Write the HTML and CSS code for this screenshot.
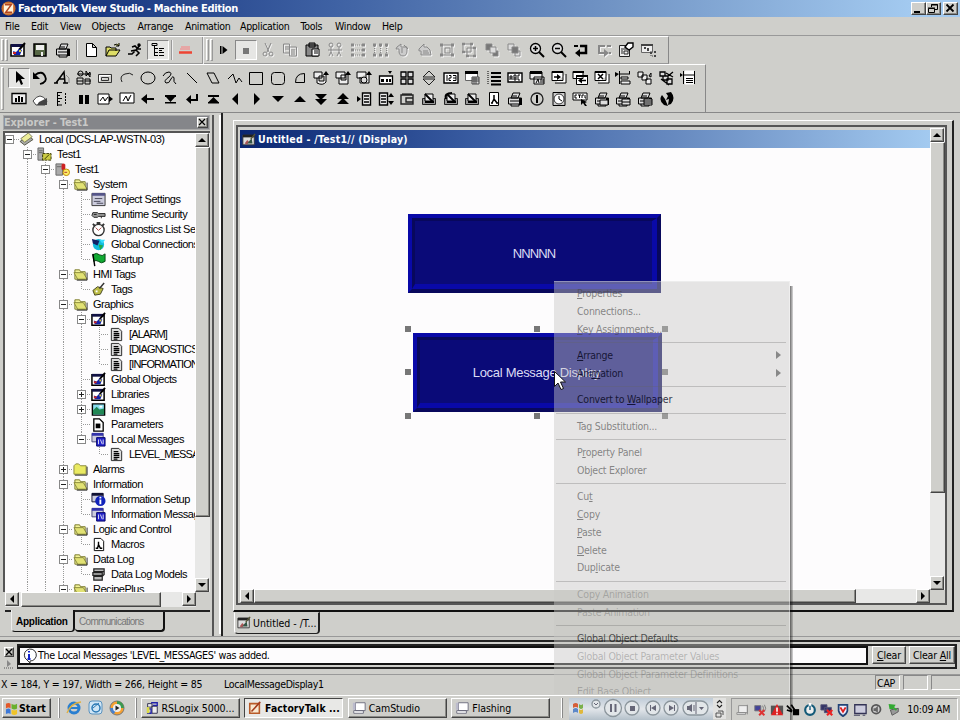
FILE: index.html
```html
<!DOCTYPE html>
<html lang="en">
<head>
<meta charset="utf-8">
<title>FactoryTalk View Studio - Machine Edition</title>
<link rel="stylesheet" href="styles.css">
</head>
<body>
<svg class="defs" width="0" height="0">
<symbol id="display" viewBox="0 0 16 16"><path fill="#fff" stroke="#000" stroke-width="1.6" d="M1 3h13v11H1z"/><path fill="#114" d="M1 2h13v3H1z"/><path stroke="#000" stroke-width="2" d="M9 8l6-7"/><path fill="#12a" d="M3 9l3 1 3-3 3 1-2 5H4z"/><path fill="#c22" d="M3 10h3v2H3z"/><path fill="#dc3" d="M9 8h2v2H9z"/></symbol>
<symbol id="form" viewBox="0 0 16 16"><path fill="#ddd" stroke="#333" d="M1 2.500h13v11H1z"/><path fill="#222" d="M1 2h13v3H1z"/><path fill="#a55" d="M3 12l3-4 2 2-2 3z"/><path fill="#354" d="M6 12l5-6 1 6z"/><path stroke="#553" stroke-width="1.500" d="M10 7l5-6"/></symbol>
<symbol id="folder" viewBox="0 0 16 16"><path fill="#f4f49a" stroke="#77772a" d="M2 13V3h5l1 2h5v8z"/><path fill="#e2e274" stroke="#88883a" d="M1 6h10l4 7H5z"/><path stroke="#222" d="M4 14h11V6"/></symbol>
<symbol id="closed" viewBox="0 0 16 16"><path fill="#eaea62" stroke="#88883a" d="M1 13V4l2-2h3l2 2h6v9z"/><path stroke="#222" d="M2 14h13V5"/></symbol>
<symbol id="doc" viewBox="0 0 16 16"><path fill="#ddd" stroke="#222" d="M2.500 1.500h8l3 3v10h-11z"/><path stroke="#000" stroke-width="1.300" d="M5 5h5M5 7h6M5 9h6M5 11h6M5 13h4"/></symbol>
<symbol id="msg" viewBox="0 0 16 16"><path fill="#ccd" stroke="#447" d="M1 1.500h12v9H1z"/><path fill="#33a" d="M1 1h12v3H1z"/><path fill="#22c" stroke="#006" d="M6 6h9v9H6z"/><path stroke="#dde" d="M8 8v5M10 8l2 5M13 8v5"/></symbol>
<symbol id="prn" viewBox="0 0 16 16"><path fill="#ddd" stroke="#000" d="M1.500 7h13v6h-13zM4 7l2-5h7l-2 5zM3 10h10M5 5h5M4 13v2h8v-2"/><path fill="#000" d="M12 7h3v7h-3z"/></symbol>
<symbol id="pen" viewBox="0 0 16 16"><path fill="#999" stroke="#222" d="M1.500 7.500h13v6h-13z"/><path fill="#eee" stroke="#000" d="M4 3h8v7H4z"/><path stroke="#000" stroke-width="1.800" d="M4 3l8 8M4 11h9"/></symbol>
</svg>

<header class="title">
  <svg class="logo" viewBox="0 0 16 16"><circle cx="8" cy="8" r="7.500" fill="#c86a28"/><path fill="#fff5dc" d="M3 3h10v10H3z"/><path stroke="#b4461e" stroke-width="1.500" d="M4 4h7L5 12h7"/></svg>
  <span class="titletext">FactoryTalk View Studio - Machine Edition</span>
  <span class="wbtns"><b><svg viewBox="0 0 12 11"><path stroke="#000" stroke-width="2" d="M2 9h6"/></svg></b><b><svg viewBox="0 0 12 11"><path stroke="#000" d="M4.500 4V1.500h6v5H8M1.500 5.500h6v4h-6zM4 2h7M1 5h7"/></svg></b><b class="gap"><svg viewBox="0 0 12 11"><path stroke="#000" stroke-width="1.800" d="M2.500 1.500l7 7M9.500 1.500l-7 7"/></svg></b></span>
</header>

<nav class="menubar"><span>File</span><span>Edit</span><span>View</span><span>Objects</span><span>Arrange</span><span>Animation</span><span>Application</span><span>Tools</span><span>Window</span><span>Help</span></nav>

<div class="tb tb1">
  <i class="grip"></i><i class="grip"></i>
  <svg><use href="#display"/></svg>
  <svg viewBox="0 0 16 16"><path fill="#564" stroke="#000" stroke-width="1.500" d="M2 2h12v12H2z"/><path fill="#eee" d="M4 3h8v5H4zM9 10h2v4H9z"/></svg>
  <svg><use href="#prn"/></svg>
  <i class="sep"></i>
  <svg viewBox="0 0 16 16"><path fill="#fff" stroke="#000" d="M3.500 1.500h6l4 4v9h-10zM9.500 1.500v4h4"/></svg>
  <svg viewBox="0 0 16 16"><path fill="#dd6" stroke="#000" d="M1 14V5h4l1 1h5v3M1 14l3-6h11l-4 6zM9 3q3-2 5 1M14 1v3h-3"/></svg>
  <svg viewBox="0 0 16 16"><path stroke="#000" stroke-width="1.600" d="M13 3l-4 5-5 1M9 8l3 3-3 3M8 9l-3 3H1M5 5l3-1 3 3h3"/><circle cx="12" cy="3" r="1.700" fill="#000"/></svg>
  <span class="pressed"><svg viewBox="0 0 16 16"><path stroke="#000" d="M2 1.500h5v2H2zM4.500 4v10M5 6.500h3M5 13.500h3M9 6.500h5M9 8.500h3M5 10.500h3M9 10.500h5M9 13.500h5"/></svg></span>
  <i class="sep"></i>
  <svg viewBox="0 0 16 16"><path stroke="#e99" stroke-width="1.500" d="M4 5h9M3 7h10"/><path stroke="#e43" stroke-width="2.500" d="M2 10.500h13"/></svg>
  <i class="sep end"></i><i class="grip"></i><i class="grip g2"></i>
  <svg viewBox="0 0 16 16"><path fill="#000" d="M4 4h1.500v8H4zM6.500 4l5 4-5 4z"/></svg>
  <span class="pressed"><svg viewBox="0 0 16 16"><path fill="#777" d="M5 6h6v6H5z"/></svg></span>
  <svg class="off" viewBox="0 0 16 16"><path d="M5 1l4 9M11 1L7 10"/><circle cx="5" cy="12" r="2"/><circle cx="11" cy="12" r="2"/></svg>
  <svg class="off" viewBox="0 0 16 16"><path d="M1.500 2h6v9h-6zM3 5h4M3 7h4M7.500 5h7v9h-7zM9 8h4M9 10h4M9 12h4"/></svg>
  <svg viewBox="0 0 16 16"><path fill="#888" stroke="#000" d="M1 3h12v11H1zM4 1h6v4H4z"/><path fill="#fff" stroke="#000" d="M7 7h7v7H7zM9 9h4M9 11h4"/></svg>
  <svg class="off" viewBox="0 0 16 16"><circle cx="4" cy="3" r="2"/><circle cx="12" cy="3" r="2"/><path d="M4 5v5l-2 4M4 10l2 4M1 8h14M12 5v5l-2 4M12 10l2 4"/></svg>
  <svg class="off" viewBox="0 0 16 16"><path stroke-width="3" d="M1 3h3M12 3h3M1 8h3M12 8h3M1 13h3M12 13h3"/><path stroke-dasharray="1 1" d="M5 3h7M5 8h7M5 13h7"/></svg>
  <svg class="off" viewBox="0 0 16 16"><path stroke-width="3" d="M1 3h3M7 3h3M13 3h3M1 13h3M7 13h3M13 13h3"/><path stroke-dasharray="1 1" d="M2.500 4v8M8.500 4v8M14.500 4v8"/></svg>
  <svg class="off" viewBox="0 0 16 16"><path fill="#ccc" d="M3 5l4-3v3h6v4q0 5-4 5T5 9V7H2z"/><path d="M8 6v5M10 3l4 4"/></svg>
  <svg class="off" viewBox="0 0 16 16"><path fill="#ccc" d="M2 7l5-5v3h3q4 2 4 8H4V9H2z"/><path d="M6 9h5M6 11h6"/></svg>
  <svg class="off" viewBox="0 0 16 16"><path d="M3 3h10v10H3zM6 6h5v5H6z"/><path stroke-width="3" d="M1 3h3M12 3h3M1 13h3M12 13h3"/></svg>
  <svg class="off" viewBox="0 0 16 16"><path d="M2 2h8v8H2zM6 6h8v8H6z"/><path stroke-width="2.500" d="M1 2h3M9 2h3M1 10h3M12 14h3M12 6h3M5 14h3"/></svg>
  <svg class="off" viewBox="0 0 16 16"><path fill="#777" d="M2 2h6v6H2zM9 9h5v5H9z"/><path fill="#ddd" d="M6 5h6v6H6z"/></svg>
  <svg class="off" viewBox="0 0 16 16"><path fill="#ddd" d="M2 2h6v6H2zM9 9h5v5H9z"/><path fill="#777" d="M6 5h6v6H6z"/></svg>
  <svg viewBox="0 0 16 16"><circle cx="6.500" cy="6.500" r="5" fill="#ddd" stroke="#000" stroke-width="1.300"/><path stroke="#000" stroke-width="2" d="M10 10l5 5"/><path stroke="#000" stroke-width="1.500" d="M4 6.500h5M6.500 4v5"/></svg>
  <svg viewBox="0 0 16 16"><circle cx="6.500" cy="6.500" r="5" fill="#ddd" stroke="#000" stroke-width="1.300"/><path stroke="#000" stroke-width="2" d="M10 10l5 5"/><path stroke="#000" stroke-width="1.500" d="M4 6.500h5"/></svg>
  <svg viewBox="0 0 16 16"><path stroke="#000" stroke-width="2.500" d="M7 4h6v7H6"/><path fill="#000" d="M7 7v8l-5-4zM1 3h4v2H1z"/></svg>
  <svg class="off" viewBox="0 0 16 16"><path stroke-width="2" d="M9 4H3v7h5"/><path fill="#888" stroke="none" d="M8 7v8l5-4zM11 3h4v2h-4zM13 10h2v2h-2z"/></svg>
  <svg viewBox="0 0 16 16"><path fill="#eee" stroke="#222" d="M1.500 3.500h10v11h-10zM3 7h6M3 9h2M3 11h2M6 9h4v3H6z"/><path fill="#fff" stroke="#000" stroke-width="1.400" d="M7 5l3-4h5v4l-4 3z"/></svg>
  <svg viewBox="0 0 16 16"><path fill="#eee" stroke="#666" d="M1.500 2.500h11v8h-11z"/><path fill="#444" d="M1 2h12v2H1zM4 5h2v2H4zM7 6h2v3H7zM10 10h2v2h-2zM14 9h2v2h-2zM14 13h2v2h-2z"/><path stroke="#444" stroke-dasharray="1 1" d="M11 9v5h4"/></svg>
</div>

<div class="tb tb2">
 <i class="grip"></i>
 <div class="grid">
  <span class="pressed"><svg viewBox="0 0 16 16"><path fill="#000" d="M5 1v12l3-3 2 5 2-1-2-5h4z"/></svg></span>
  <svg viewBox="0 0 16 16"><path stroke="#000" stroke-width="1.800" d="M3 5q7-5 10 1t-5 8"/><path fill="#000" d="M1 2v7h7z"/></svg>
  <svg viewBox="0 0 16 16"><path stroke="#000" stroke-width="1.500" d="M2 13L10 2l1 11M5 9h6M0 13h4M9 13h5"/><path stroke="#888" d="M12 5l3 3v5"/></svg>
  <svg viewBox="0 0 16 16"><circle cx="4.500" cy="3.500" r="2.500" stroke="#000"/><path stroke="#000" d="M1 4h14M10 1v5l4-4v5zM1 8h6v6H1zM1 11h6M9 9h5v5H9zM9 11h6"/></svg>
  <svg viewBox="0 0 16 16"><path stroke="#333" d="M1.500 4.500h13v8h-13z"/><path fill="#ddd" stroke="#fff" d="M2.500 11V5.500h11"/><path stroke="#333" d="M4.500 7.500h7v3h-7z"/></svg>
  <svg viewBox="0 0 16 16"><path stroke="#222" d="M3 12Q0 6 6 4q5-2 8 1"/></svg>
  <svg viewBox="0 0 16 16"><ellipse cx="8" cy="8" rx="7" ry="6" stroke="#000"/></svg>
  <svg viewBox="0 0 16 16"><path stroke="#000" d="M1 6q2-4 6-4 4 1 0 5-6 4-3 6 3 1 5-4 2-4 3-1-1 4 2 6"/></svg>
  <svg viewBox="0 0 16 16"><path stroke="#000" d="M3 3l10 10"/></svg>
  <svg viewBox="0 0 16 16"><path stroke="#000" d="M2 3h7l5 10H7z"/></svg>
  <svg viewBox="0 0 16 16"><path stroke="#000" d="M1 9l5-5 3 9 3-5 3 4"/></svg>
  <svg viewBox="0 0 16 16"><path stroke="#000" d="M1.500 2.500h13v12h-13z"/></svg>
  <svg viewBox="0 0 16 16"><rect x="1.500" y="2.500" width="13" height="12" rx="3" stroke="#000"/></svg>
  <svg viewBox="0 0 16 16"><path stroke="#000" d="M3.500 12.500q0-9 9-9v9z"/></svg>
  <svg viewBox="0 0 16 16"><path fill="#eee" stroke="#000" d="M1 2h8v6H1zM4 8v5q6 3 9-1V3M6 6h5v5H6z"/><path fill="#000" d="M10 5l3-4 3 4z"/></svg>
  <svg viewBox="0 0 16 16"><path fill="#eee" stroke="#000" d="M1 2h9v6H1zM4 8v6h9V3M6 5h5v5H6z"/><path fill="#000" d="M10 5l3-4 3 4z"/></svg>
  <svg viewBox="0 0 16 16"><path fill="#eee" stroke="#000" d="M1 2h9v6H1zM4 7v6h9V3"/><circle cx="8" cy="10" r="3" fill="#ddd" stroke="#000"/><path fill="#000" d="M10 5l3-4 3 4z"/></svg>
  <svg viewBox="0 0 16 16"><path fill="#fff" stroke="#000" stroke-width="1.300" d="M1.500 6h13v8h-13z"/><path fill="#000" d="M3 9h3v3H3zM8 9h2v3H8zM11 9h2v3h-2zM10 1h4l-2 3z"/></svg>
  <svg viewBox="0 0 16 16"><path fill="#ddd" stroke="#000" stroke-width="1.300" d="M2 2h5v5H2zM9 2h5v5H9zM2 9h5v5H2zM9 9h5v5H9z"/></svg>
  <svg viewBox="0 0 16 16"><path stroke="#222" d="M2 7l6-6 6 6zM2 9l6 6 6-6z"/></svg>
  <svg viewBox="0 0 16 16"><path fill="#fff" stroke="#000" stroke-width="1.400" d="M1 3h14v10H1z"/><path stroke="#000" d="M4 5v6M6 5.500h2V8H6v2.500h2M10 5.500h3v5h-3M10 8h3"/></svg>
  <svg viewBox="0 0 16 16"><path fill="#fff" stroke="#666" d="M1.500 1.500h12v9h-12z"/><path fill="#000" d="M1 1h13v3H1z"/><path fill="#ddd" stroke="#444" d="M8 7h7v7H8zM8 9h7M8 11h7M10 7v7M12 7v7"/></svg>
  <svg viewBox="0 0 16 16"><path stroke="#000" stroke-width="2.200" d="M5 3h10M5 7h10M5 11h10M5 14.500h10"/><path stroke="#000" stroke-dasharray="1 1" d="M2 1v14"/></svg>
  <svg viewBox="0 0 16 16"><path fill="#fff" stroke="#000" stroke-width="1.400" d="M1 3h14v9H1z"/><path stroke="#000" d="M3 10V6h2v4M3 8h2M7 5v5h2V5zM7 8h2M13 5h-2v5h2"/></svg>
  <svg viewBox="0 0 16 16"><path fill="#eee" stroke="#000" d="M1 2h12v7H1zM5 7h10v7H5z"/><path fill="#000" d="M1 1h12v3H1z"/><path stroke="#000" d="M7 13l2-4 1 4M12 9v4M14 9v4"/></svg>
  <svg viewBox="0 0 16 16"><path fill="#fff" stroke="#000" d="M1 1.500h11v9H1zM4 13h11V4"/><path fill="#000" d="M1 1h11v2H1zM6 4l4 3-4 3z"/><path stroke="#000" stroke-width="1.500" d="M3 7h5"/></svg>
  <svg viewBox="0 0 16 16"><path fill="#fff" stroke="#000" d="M1 1.500h10v7H1zM4.500 5.500h11v9h-11z"/><path fill="#000" d="M1 1h11v2H1zM4 5h12v2H4zM10 7.500v6l-4-3z"/><path stroke="#000" stroke-width="1.500" d="M9 10.500h5"/></svg>
  <svg viewBox="0 0 16 16"><path fill="#fff" stroke="#000" d="M1 1.500h11v9H1zM4 13h11V4"/><path fill="#000" d="M1 1h11v2H1z"/><path stroke="#000" stroke-width="1.500" d="M4 4l5 5M9 4L4 9"/></svg>
  <svg viewBox="0 0 16 16"><path fill="#eee" stroke="#000" d="M4.500 1v13M14.500 1v3M5 4h10M6 7h7v2H6zM6 11h9v3H6z"/><path fill="#000" d="M0 2l4 2-4 3z"/></svg>
  <svg viewBox="0 0 16 16"><path fill="#eee" stroke="#000" d="M1 2h5v5H1zM5 5h5v5H5zM9 9h5v5H9zM12 6l2-3v4z"/></svg>
  <svg viewBox="0 0 16 16"><path fill="#ddd" stroke="#000" stroke-width="1.300" d="M1 2h5v4H1zM4 6h5v4H4zM8 9h5v5H8zM7 3l7 4M2 9l8 6M9 6l5-4"/></svg>
  <svg viewBox="0 0 16 16"><path fill="#fff" stroke="#fff" d="M5 1h9v13H5z"/><path stroke="#000" d="M3.500 1v13M14.500 1v13M4 5h10M6 8.500h7M6 10.500h7M6 12.500h7"/><path fill="#000" d="M0 3l3 2-3 2z"/></svg>

  <svg viewBox="0 0 16 16"><path fill="#eee" stroke="#000" stroke-width="1.300" d="M1 2.500h14v10H1z"/><path fill="#000" d="M4 7h2v4H4zM7 5h2v6H7zM10 6h2v5h-2z"/></svg>
  <svg viewBox="0 0 16 16"><path fill="#fff" stroke="#444" d="M1 10q7-10 14 0l-2 4H4z"/><path fill="#444" d="M7 11l8-4v7H5z"/></svg>
  <svg viewBox="0 0 16 16"><path stroke="#000" d="M3.500 1v14M3 1.500h5M3 4.500h3M3 7.500h5M3 10.500h3M3 14h5"/><path stroke="#000" stroke-dasharray="2 1" d="M11.500 2v12"/></svg>
  <svg viewBox="0 0 16 16"><path fill="#000" d="M3 4h4v9H3zM9 4h4v9H9z"/></svg>
  <svg viewBox="0 0 16 16"><path fill="#fff" stroke="#000" d="M1 3h11v10H1zM3 10l3-4 2 4 3-4"/><path fill="#000" d="M12 5l4 3-4 3z"/></svg>
  <svg viewBox="0 0 16 16"><path fill="#fff" stroke="#000" d="M1 2h14v10H1zM4 10l3-5 2 5 3-6"/></svg>
  <svg viewBox="0 0 16 16"><path stroke="#000" stroke-width="2" d="M5 8h9"/><path fill="#000" d="M7 3v10L1 8z"/></svg>
  <svg viewBox="0 0 16 16"><path fill="#000" d="M3 4h11v2H3zM4 6h9l-4.500 5zM3 11h11v1.500H3z"/></svg>
  <svg viewBox="0 0 16 16"><path stroke="#000" stroke-width="2" d="M13 3v6H6"/><path fill="#000" d="M7 4v9L2 8.500z"/></svg>
  <svg viewBox="0 0 16 16"><path fill="#000" d="M3 4h11v2H3zM8.500 6l5 5h-10zM3 11h11v1.500H3z"/></svg>
  <svg viewBox="0 0 16 16"><path fill="#000" d="M11 2v12L5 8z"/></svg>
  <svg viewBox="0 0 16 16"><path fill="#000" d="M6 2v12l6-6z"/></svg>
  <svg viewBox="0 0 16 16"><path fill="#000" d="M2 5h12l-6 6z"/></svg>
  <svg viewBox="0 0 16 16"><path fill="#000" d="M2 11h12L8 5z"/></svg>
  <svg viewBox="0 0 16 16"><path fill="#000" d="M2 3h12l-5 5h5l-6 6-6-6h5z"/></svg>
  <svg viewBox="0 0 16 16"><path fill="#000" d="M8 2l6 6H9l5 5H2l5-5H2z"/></svg>
  <svg viewBox="0 0 16 16"><path fill="#eee" stroke="#000" stroke-width="1.400" d="M6.500 2h8v12h-8zM8 5h5M8 8h5M8 11h5"/><path fill="#000" d="M1 5l4 3-4 3z"/></svg>
  <svg viewBox="0 0 16 16"><path fill="#eee" stroke="#000" stroke-width="1.400" d="M1.500 2h8v12h-8zM3 5h5M3 8h5M3 11h5"/><path fill="#000" d="M10 6h6l-3-4zM10 10h6l-3 4z"/></svg>
  <svg viewBox="0 0 16 16"><path stroke="#222" stroke-width="1.400" d="M2 4h12v9H2zM7 7h7v4H7z"/><path stroke="#000" d="M3 3h10"/></svg>
  <svg><use href="#pen"/></svg>
  <svg viewBox="0 0 16 16"><use href="#pen"/><path stroke="#000" stroke-width="2" d="M3 8Q1 2 9 2"/></svg>
  <svg><use href="#pen"/></svg>
  <svg viewBox="0 0 16 16"><path fill="#fff" stroke="#000" d="M3.500 1.500h9v13h-9z"/><path stroke="#000" stroke-width="1.500" d="M8 4v4M6 12l2-4 3 4M5 12h2M10 12h2"/></svg>
  <svg><use href="#prn"/></svg>
  <svg viewBox="0 0 16 16"><circle cx="8" cy="8" r="6" stroke="#222" stroke-width="1.300"/><path stroke="#000" stroke-width="2" d="M8 4v8"/></svg>
  <svg viewBox="0 0 16 16"><path fill="#ccc" stroke="#000" d="M2 1.500h12v13H2z"/><circle cx="8" cy="8" r="5" fill="#fff" stroke="#333"/><path stroke="#000" d="M8 5v3l3 2"/></svg>
  <svg viewBox="0 0 16 16"><path fill="#fff" stroke="#000" d="M1 2h14v7H1z"/><path stroke="#000" d="M5 4H3v3h2M6 4h3M7.500 4v3M10 7V4h2M13 4v3h1"/><path fill="#000" d="M9 8l6 3-2 1 2 3h-2l-2-3-2 2z"/></svg>
  <svg viewBox="0 0 16 16"><use href="#prn"/><path fill="#ddd" stroke="#000" d="M6 9h8v5H6z"/></svg>
  <svg viewBox="0 0 16 16"><use href="#prn"/><path fill="#ddd" stroke="#000" d="M7 8h8v6H7zM7 11h8"/></svg>
  <svg viewBox="0 0 16 16"><use href="#prn"/><path fill="#ddd" stroke="#000" d="M7 8h8v6H7zM7 10h8M7 12h8"/></svg>
  <svg viewBox="0 0 16 16"><path fill="#000" d="M3 4q-4 5 2 10l4 1-3-7zM7 2l5-1q5 6 0 12l-3 1 1-6-3 1 2-4z"/></svg>
 </div>
</div>

<main class="main">
 <aside class="explorer">
  <div class="exphead"><span>Explorer - Test1</span><b><svg viewBox="0 0 8 8"><path stroke="#000" stroke-width="1.200" d="M1 1l6 6M7 1L1 7"/></svg></b></div>
  <div class="treewrap">
   <div class="tree">
    <div class="row"><i class="m first"></i><svg viewBox="0 0 16 16"><path fill="#aaa" stroke="#554" d="M1 10l5 4 9-6-4-3z"/><path fill="#ee9" stroke="#775" d="M2 7l8-6 4 4-8 6z"/></svg>Local (DCS-LAP-WSTN-03)</div>
    <div class="row"><i></i><i class="m"></i><svg viewBox="0 0 16 16"><path fill="#aaa" stroke="#666" d="M1 1h6v13H1zM2 4h4M2 6h4"/><path fill="#cc4" stroke="#330" stroke-dasharray="3 1" d="M6 7h9v7H6z"/><path stroke="#330" d="M8 13l5-5"/></svg>Test1</div>
    <div class="row"><i></i><i class="v"></i><i class="m"></i><svg viewBox="0 0 16 16"><path fill="#aaa" stroke="#666" d="M1 2h7v12H1zM2 5h5"/><path fill="#c22" d="M7 8V3q2-3 4 0v6z"/><circle cx="12" cy="11" r="3.500" fill="#fe6" stroke="#b80"/><path stroke="#a33" d="M10 11h3"/></svg>Test1</div>
    <div class="row"><i></i><i class="v"></i><i class="v"></i><i class="m"></i><svg><use href="#folder"/></svg>System</div>
    <div class="row"><i></i><i class="v"></i><i class="v"></i><i class="v"></i><i class="t"></i><svg viewBox="0 0 16 16"><path fill="#ccd" stroke="#333" d="M1 1.500h14v13H1z"/><path fill="#558" d="M1 1h14v3H1z"/><path stroke="#445" d="M4 7h8M3 10h7M6 12h7"/></svg>Project Settings</div>
    <div class="row"><i></i><i class="v"></i><i class="v"></i><i class="v"></i><i class="t"></i><svg viewBox="0 0 16 16"><path fill="#999" stroke="#222" d="M2 6h5l1 1h7v3H8l-1 1H3L1 9z"/><path stroke="#222" d="M3 8h3M11 10v2"/></svg>Runtime Security</div>
    <div class="row"><i></i><i class="v"></i><i class="v"></i><i class="v"></i><i class="t"></i><svg viewBox="0 0 16 16"><circle cx="8" cy="8.500" r="6" fill="#fff" stroke="#333" stroke-width="1.500"/><path stroke="#333" stroke-width="2" d="M6 1h4M2 2l2 2M14 2l-2 2"/><path stroke="#a44" d="M5 6l3 3 3-3"/></svg>Diagnostics List Se</div>
    <div class="row"><i></i><i class="v"></i><i class="v"></i><i class="v"></i><i class="t"></i><svg viewBox="0 0 16 16"><circle cx="8" cy="8" r="6" fill="#1bd"/><path fill="#126" d="M1 2l8 2-2 5-5-2z"/><path fill="#2a4" d="M8 8l5 1-3 5z"/><path fill="#3df" d="M9 3h6l-3 4z"/></svg>Global Connections</div>
    <div class="row"><i></i><i class="v"></i><i class="v"></i><i class="v"></i><i class="l"></i><svg viewBox="0 0 16 16"><path fill="#1a3" stroke="#041" d="M2 3q4-3 7 0 3 2 6-1v8q-4 3-7 0-3-2-5 0z"/><path stroke="#000" stroke-width="1.500" d="M2 2l2 13"/></svg>Startup</div>
    <div class="row"><i></i><i class="v"></i><i class="v"></i><i class="m"></i><svg><use href="#folder"/></svg>HMI Tags</div>
    <div class="row"><i></i><i class="v"></i><i class="v"></i><i class="v"></i><i class="l"></i><svg viewBox="0 0 16 16"><path fill="#bb4" stroke="#442" d="M2 9l5-4 6 2-3 6-6 1z"/><path stroke="#333" stroke-width="1.500" d="M9 7l5-6"/><path fill="#fff" d="M5 9h2v2H5z"/></svg>Tags</div>
    <div class="row"><i></i><i class="v"></i><i class="v"></i><i class="m"></i><svg><use href="#folder"/></svg>Graphics</div>
    <div class="row"><i></i><i class="v"></i><i class="v"></i><i class="v"></i><i class="m"></i><svg><use href="#display"/></svg>Displays</div>
    <div class="row caps"><i></i><i class="v"></i><i class="v"></i><i class="v"></i><i class="v"></i><i class="t"></i><svg><use href="#doc"/></svg>[ALARM]</div>
    <div class="row caps"><i></i><i class="v"></i><i class="v"></i><i class="v"></i><i class="v"></i><i class="t"></i><svg><use href="#doc"/></svg>[DIAGNOSTICS]</div>
    <div class="row caps"><i></i><i class="v"></i><i class="v"></i><i class="v"></i><i class="v"></i><i class="l"></i><svg><use href="#doc"/></svg>[INFORMATION]</div>
    <div class="row"><i></i><i class="v"></i><i class="v"></i><i class="v"></i><i class="t"></i><svg><use href="#display"/></svg>Global Objects</div>
    <div class="row"><i></i><i class="v"></i><i class="v"></i><i class="v"></i><i class="m p"></i><svg><use href="#display"/></svg>Libraries</div>
    <div class="row"><i></i><i class="v"></i><i class="v"></i><i class="v"></i><i class="m p"></i><svg viewBox="0 0 16 16"><path fill="#8de" stroke="#000" stroke-width="1.500" d="M1.500 2h13v12h-13z"/><path fill="#285" d="M2 9l4-4 3 3 5-1v6H2z"/><path fill="#fff" d="M9 4h3v2H9z"/></svg>Images</div>
    <div class="row"><i></i><i class="v"></i><i class="v"></i><i class="v"></i><i class="t"></i><svg viewBox="0 0 16 16"><path fill="#fff" stroke="#000" stroke-width="1.400" d="M3 2h6l4 4v9H3z"/><path fill="#000" d="M5 7h5v5H5z"/></svg>Parameters</div>
    <div class="row"><i></i><i class="v"></i><i class="v"></i><i class="v"></i><i class="m end"></i><svg><use href="#msg"/></svg>Local Messages</div>
    <div class="row caps"><i></i><i class="v"></i><i class="v"></i><i class="v"></i><i></i><i class="l"></i><svg><use href="#doc"/></svg>LEVEL_MESSAGES</div>
    <div class="row"><i></i><i class="v"></i><i class="v"></i><i class="m p"></i><svg><use href="#closed"/></svg>Alarms</div>
    <div class="row"><i></i><i class="v"></i><i class="v"></i><i class="m"></i><svg><use href="#folder"/></svg>Information</div>
    <div class="row"><i></i><i class="v"></i><i class="v"></i><i class="v"></i><i class="t"></i><svg viewBox="0 0 16 16"><path fill="#ccd" stroke="#113" d="M1 1.500h12v9H1z"/><path fill="#113" d="M1 1h12v3H1z"/><circle cx="10" cy="9.500" r="5.500" fill="#12b"/><path stroke="#fff" stroke-width="2" d="M10 5v2M10 8v5"/></svg>Information Setup</div>
    <div class="row"><i></i><i class="v"></i><i class="v"></i><i class="v"></i><i class="l"></i><svg><use href="#msg"/></svg>Information Messages</div>
    <div class="row"><i></i><i class="v"></i><i class="v"></i><i class="m"></i><svg><use href="#folder"/></svg>Logic and Control</div>
    <div class="row"><i></i><i class="v"></i><i class="v"></i><i class="v"></i><i class="l"></i><svg viewBox="0 0 16 16"><path fill="#fff" stroke="#000" d="M3.500 1.500h7l3 3v10h-10z"/><path stroke="#000" stroke-width="1.500" d="M8 5v3M5 12h2l1-4 2 4h2"/></svg>Macros</div>
    <div class="row"><i></i><i class="v"></i><i class="v"></i><i class="m"></i><svg><use href="#folder"/></svg>Data Log</div>
    <div class="row"><i></i><i class="v"></i><i class="v"></i><i class="v"></i><i class="l"></i><svg viewBox="0 0 16 16"><path fill="#bbb" stroke="#222" stroke-width="1.300" d="M3 2h11v3H3zM2 6h10v3H2zM3 10h9v4H3zM14 3v5l-2 2"/></svg>Data Log Models</div>
    <div class="row"><i></i><i class="v"></i><i class="v"></i><i class="m"></i><svg><use href="#folder"/></svg>RecipePlus</div>
   </div>
   <div class="vs"><b class="up"></b><span class="thumb tv"></span><b class="dn"></b></div>
  </div>
  <div class="hs exphs"><b class="lt"></b><span class="thumb th"></span><b class="rt"></b></div>
  <div class="exptabs"><span class="on">Application</span><span>Communications</span></div>
 </aside>
 <section class="mdi">
  <div class="frame"><div class="inner">
   <div class="left">
    <div class="wtitle"><svg><use href="#form"/></svg><span>Untitled - /Test1// (Display)</span></div>
    <div class="canvas">
      <div class="obj o1"><div><span>NNNNN</span></div></div>
      <div class="obj o2"><div><span>Local Message Display</span></div></div>
      <i class="h h1"></i><i class="h h2"></i><i class="h h3"></i><i class="h h4"></i><i class="h h5"></i><i class="h h6"></i><i class="h h7"></i><i class="h h8"></i>
    </div>
    <div class="hs mdihs"><b class="lt"></b><span class="thumb mh"></span><b class="rt"></b></div>
   </div>
   <div class="right"><div class="vs"><b class="up"></b><span class="thumb mv"></span><b class="dn"></b></div><div class="corner"></div></div>
  </div></div>
  <div class="doctab"><svg><use href="#form"/></svg><span>Untitled - /T...</span></div>
 </section>
</main>

<div class="output">
  <div class="outleft"><b><svg viewBox="0 0 8 8"><path stroke="#000" stroke-width="1.400" d="M1 1l6 6M7 1L1 7"/></svg></b><svg class="dots" viewBox="0 0 9 9"><path fill="#888" d="M3 0l4 4-4 3z"/><path stroke="#555" stroke-dasharray="1 1" d="M0 8h9"/></svg></div>
  <div class="outbox">
    <div class="log"><svg viewBox="0 0 16 16"><path fill="#fff" stroke="#333" d="M9 13a6 6 0 1 0-3-1l3 3z"/><path stroke="#12c" stroke-width="2" d="M8 3v1.500M8 6v5M6.500 11h3"/></svg><span>The Local Messages 'LEVEL_MESSAGES' was added.</span></div>
    <button class="c1"><u>C</u>lear</button><button class="c2">Clear <u>A</u>ll</button>
  </div>
</div>

<div class="status"><span class="coords">X = 184, Y = 197, Width = 266, Height = 85</span><span class="name">LocalMessageDisplay1</span><b class="cap">CAP</b><b></b><b class="last"></b></div>

<footer class="taskbar">
  <div class="start"><svg viewBox="0 0 14 14"><path fill="#e2582a" d="M1 2q3-2 5 0v5q-2-2-5 0z"/><path fill="#6ab02c" d="M7 2q3 2 6 0v5q-3 2-6 0z"/><path fill="#3c78d8" d="M1 8q3-2 5 0v5q-2-2-5 0z"/><path fill="#f0c428" d="M7 8q3 2 6 0v5q-3 2-6 0z"/></svg><span>Start</span></div>
  <i class="grip2 ga"></i>
  <svg class="q" viewBox="0 0 16 16"><circle cx="8" cy="8" r="5" stroke="#2a7fd0" stroke-width="3"/><path stroke="#2a7fd0" stroke-width="2" d="M4 8h9"/><path stroke="#e0b040" stroke-width="1.300" d="M1 13Q5 3 15 2"/></svg>
  <svg class="q" viewBox="0 0 16 16"><rect x="1" y="1" width="13" height="13" rx="3" fill="#d0e6f6" stroke="#5a92be"/><circle cx="8" cy="8" r="4" stroke="#2a78b4" stroke-width="1.500"/><path stroke="#2a78b4" d="M5 8l6-5"/></svg>
  <svg class="q" viewBox="0 0 16 16"><circle cx="8" cy="8" r="7" fill="#f6a030" stroke="#777"/><path fill="#3a9a50" d="M8 1a7 7 0 0 1 7 7H8z"/><path fill="#4480d0" d="M1 8a7 7 0 0 0 4 6l3-6z"/><circle cx="8" cy="8" r="4" fill="#eee"/><path fill="#222" d="M6.500 5.500v5l4-2.500z"/></svg>
  <i class="grip2 gb"></i>
  <div class="task"><svg viewBox="0 0 16 16"><path fill="#eee" stroke="#224" d="M3 3h5v4H3zM8 6h6v8H8z"/><path stroke="#22a" stroke-width="1.500" d="M7 2h7v3H9M3 9h4v5H3z"/><path fill="#dd4" d="M2 7h3v7H2z"/></svg><span>RSLogix 5000...</span></div>
  <div class="task act"><svg viewBox="0 0 16 16"><path fill="#f8e8d0" stroke="#b85a28" stroke-width="1.800" d="M2 3h11v11H2z"/><path stroke="#a33c1e" stroke-width="1.800" d="M4 12L14 1"/></svg><span>FactoryTalk ...</span></div>
  <div class="task t3"><svg viewBox="0 0 16 16"><path fill="#fff" stroke="#667" d="M4 2h11v9H4zM2 11h11v3H2z"/><path fill="#bbc" d="M1 2h3v8H1z"/></svg><span>CamStudio</span></div>
  <div class="task t4"><svg viewBox="0 0 16 16"><path fill="#fff" stroke="#667" d="M4 2h11v9H4zM2 11h11v3H2z"/><path fill="#bbc" d="M1 2h3v8H1z"/></svg><span>Flashing</span></div>
  <i class="grip2 gc"></i>
  <div class="player"><svg viewBox="0 0 158 22"><path fill="#d65f3a" d="M4 6q3-2 5 0v4q-2-2-5 0z"/><path fill="#7ab04c" d="M10 6q2 2 4 0v4q-2 2-4 0z"/><path fill="#5c88c8" d="M4 11q3-2 5 0v4q-2-2-5 0z"/><path fill="#e0b83c" d="M10 11q2 2 4 0v4q-2 2-4 0z"/><g fill="#e2e6e9" stroke="#8b959c" stroke-width="1.300"><circle cx="27" cy="6" r="4"/><circle cx="44" cy="10" r="8.500"/><circle cx="63" cy="10" r="7"/><circle cx="84" cy="10" r="7"/><circle cx="102" cy="10" r="7"/><rect x="114" y="3" width="25" height="14" rx="7"/></g><path stroke="#667" stroke-width="2" d="M42 6v8M46.500 6v8"/><path fill="#667" d="M61 8h5v5h-5zM82 10l5-3v6zM81 7h1v6h-1zM105 10l-5-3v6zM105 7h1v6h-1zM118 8h2l3-2v8l-3-2h-2zM130 9h5l-2.500 3z"/><path stroke="#667" d="M25 5l2 2 2-2M127 4v12M125 7v6"/></svg></div>
  <div class="spin"><svg viewBox="0 0 13 21"><path stroke="#222" stroke-width="1.100" d="M4 5l2.500-2.500L9 5M4 7l2.500 2.500L9 7"/><path stroke="#444" stroke-width=".9" d="M5 13h5v4M3 15h5v4H3z"/></svg></div>
  <div class="tray">
    <svg viewBox="0 0 16 16"><path fill="#eee" stroke="#888" d="M3 3h10v8H3zM1 11h10v2H1zM13 2v11"/></svg>
    <svg viewBox="0 0 16 16"><path fill="#449" stroke="#777" d="M2 3h7v6H2z"/><path stroke="#777" d="M11 3q2 3 0 6M13 2q3 4 0 8"/><path stroke="#d33" stroke-width="2.300" d="M7 8l6 6M13 8l-6 6"/></svg>
    <svg viewBox="0 0 16 16"><path fill="#555" d="M1 3h14v10H1z"/><path fill="#d22" d="M8 1l7 13H1z"/><path stroke="#fff" stroke-width="1.800" d="M8 5v5M8 11v2"/></svg>
    <svg viewBox="0 0 16 16"><path fill="#000" d="M8 7h7v7H8z"/><path stroke="#000" stroke-width="2" d="M1 3l6 6M6 2l4 6M1 8l6 2"/></svg>
    <svg viewBox="0 0 16 16"><circle cx="8" cy="8" r="5.500" fill="#eee" stroke="#135a78" stroke-width="2.500"/><path stroke="#fff" stroke-width="3" d="M8 0v6"/><path stroke="#135a78" stroke-width="1.600" d="M8 3v5"/></svg>
    <svg viewBox="0 0 16 16"><path fill="#336" stroke="#557" d="M1 2h7v6H1zM5 5h8v6H5z"/><path stroke="#e22" stroke-width="2.500" d="M8 8l6 6M14 8l-6 6"/></svg>
    <svg viewBox="0 0 16 16"><path fill="#eef" stroke="#247" stroke-width="2" d="M3 2h10v7q-1 4-5 6-4-2-5-6z"/><path stroke="#d22" stroke-width="2.200" d="M5 5l3 5 3-5"/></svg>
    <svg viewBox="0 0 16 16"><path fill="#ccd" stroke="#335" stroke-width="1.500" d="M2 2h13v10H2z"/><path stroke="#335" d="M1 14h7M11 14h3"/></svg>
    <svg viewBox="0 0 16 16"><circle cx="7" cy="7" r="5" fill="#ccc" stroke="#555" stroke-width="2"/><path fill="#666" d="M4 6h2l3-3v8L6 9H4z"/></svg>
    <svg viewBox="0 0 16 16"><path fill="#3a3" d="M3 1l8 1-3 5H4z"/><path fill="#999" stroke="#555" d="M5 8l9-2v4l-7 4z"/><path stroke="#3a3" stroke-width="2" d="M8 5l4 3"/></svg>
    <time>10:09 AM</time>
  </div>
</footer>

<div class="ctx">
  <p><u>P</u>roperties</p><p>Connections...</p><p><u>K</u>ey Assignments...</p><hr>
  <p class="dark sub"><u>A</u>rrange<i></i></p><p class="dark sub">Ani<u>m</u>ation<i></i></p><hr>
  <p class="dark">Convert to <u>W</u>allpaper</p><hr>
  <p>Ta<u>g</u> Substitution...</p><hr>
  <p>P<u>r</u>operty Panel</p><p>Ob<u>j</u>ect Explorer</p><hr>
  <p>Cu<u>t</u></p><p><u>C</u>opy</p><p><u>P</u>aste</p><p><u>D</u>elete</p><p>Dup<u>l</u>icate</p><hr>
  <p class="faint">Copy Animation</p><p class="faint">Paste Animation</p><hr>
  <p class="mid">Global Object Defaults</p><p class="faint">Global Object Parameter Values</p><p class="faint">Global Object Parameter Definitions</p><p class="faint">Edit Base Object</p>
</div>
<div class="shadow"></div>
<svg class="cursor" viewBox="0 0 12 20"><path fill="#fff" stroke="#111" d="M.500.500v15l3.500-3.500 3 6.500 2.500-1-3-6.500h5z"/></svg>
</body>
</html>
```
FILE: styles.css
```css
* { box-sizing: border-box; }
body {
  margin: 0; width: 960px; height: 720px; overflow: hidden; position: relative;
  background: #cfcfcb; color: #000;
  font: 10.5px/13px "DejaVu Sans Condensed", "Noto Sans", sans-serif;
  letter-spacing: -.220px;
  display: flex; flex-direction: column; white-space: nowrap;
}
svg { fill: none; flex: none; display: block; }
.defs { position: absolute; }
u { text-underline-offset: 1px; }

/* title */
.title { height: 17px; flex: none; display: flex; align-items: center; background: linear-gradient(90deg, #0a2672, #3f62a4 35%, #7396c6 65%, #a3caf0 95%); color: #fff; }
.logo { width: 15px; height: 15px; margin: 0 2px 0 1px; }
.titletext { font-weight: bold; font-size: 11px; flex: 1; letter-spacing: -.330px; }
.wbtns { display: flex; padding-right: 2px; }
.wbtns b, .exphead b, .outleft b, .vs b, .hs b, .thumb, button, .start, .task {
  background: #cfcfcb; border: 1px solid; border-color: #fff #444 #444 #fff; box-shadow: inset -1px -1px #8a8a86;
}
.wbtns b { width: 15px; height: 13px; }
.wbtns b svg { width: 12px; height: 11px; }
.wbtns .gap { margin-left: 2px; }

.menubar { height: 19px; flex: none; display: grid; grid-template-columns: 26px 29px 31.500px 46px 47.500px 55px 60.500px 34.500px 47px 40px; padding: 3px 0 0 5px; border-bottom: 1px solid #999; letter-spacing: -.300px; }

/* toolbars */
.tb { flex: none; display: flex; align-items: center; border-top: 1px solid #fff; border-right: 1px solid #888; border-bottom: 1px solid #999; }
.tb svg { width: 16px; height: 16px; }
.tb .grip { width: 3px; align-self: stretch; margin: 2px 0 2px 1px; border: 1px solid; border-color: #fff #999 #999 #fff; }
.tb1 { height: 28px; width: 669px; }
.tb1 > svg { margin: 0 3.200px; }
.tb1 .grip + svg { margin-left: 2px; }
.tb1 .sep { width: 2px; height: 20px; margin: 0 1.600px 0 2px; border-left: 1px solid #999; border-right: 1px solid #eee; }
.tb1 .sep.end { height: 27px; margin: 0 1px 0 5px; }
.tb1 .g2 + svg { margin-left: 3px; }
.pressed { width: 22px; height: 20px; padding: 1px 2px; background: #e6e6e4; border: 1px solid; border-color: #888 #fff #fff #888; }
.off { stroke: #888; filter: drop-shadow(1px 1px 0 #f4f4f4); }
.tb2 { height: 48px; width: 706px; border-bottom: 0; }
.tb2 .grip { margin-right: 4px; }
.grid { display: grid; grid-template-columns: repeat(32, 21.600px); grid-auto-rows: 21.500px; justify-items: center; align-items: center; }

/* main */
.main { height: 525px; flex: none; display: flex; border-top: 1px solid #888; border-bottom: 1px solid #999; }
.explorer { width: 214px; margin-top: 2px; border-right: 2px solid #555; padding: 0 2px 0 3px; }
.exphead { height: 15px; display: flex; align-items: center; justify-content: space-between; background: #85868a; color: #c9c9c7; font-weight: bold; font-size: 10.800px; border: 1px solid #aaa; margin-bottom: 1px; letter-spacing: -.080px; }
.exphead b { width: 11px; height: 11px; margin-right: 1px; }
.exphead b svg { width: 8px; height: 8px; }
.treewrap { display: flex; height: 461px; border-top: 2px solid #555; border-left: 2px solid #555; }
.tree { width: 191px; background: #fdfcfd; overflow: hidden; }
.row { height: 15px; display: flex; align-items: center; font: 11px/15px "Liberation Sans", sans-serif; letter-spacing: -.470px; }
.row.caps { letter-spacing: -.850px; }
.row:first-child { margin-top: -1px; }
.row i { width: 18px; height: 15px; flex: none; }
.row i:first-child { width: 14px; }
.row svg { width: 15px; height: 15px; margin: 0 5px 0 0; }
.row i.v { background: repeating-linear-gradient(#999 0 1px, #fff 1px 2px) 8px 0 / 1px 100% no-repeat; }
.row i.t { background: repeating-linear-gradient(#999 0 1px, #fff 1px 2px) 8px 0 / 1px 100% no-repeat, repeating-linear-gradient(90deg, #999 0 1px, #fff 1px 2px) 8px 7px / 10px 1px no-repeat; }
.row i.l { background: repeating-linear-gradient(#999 0 1px, #fff 1px 2px) 8px 0 / 1px 8px no-repeat, repeating-linear-gradient(90deg, #999 0 1px, #fff 1px 2px) 8px 7px / 10px 1px no-repeat; }
.row i.m { background: linear-gradient(#222, #222) 6px 7px / 5px 1px no-repeat, linear-gradient(#fff, #fff) 5px 4px / 7px 7px no-repeat, linear-gradient(#888, #888) 4px 3px / 9px 9px no-repeat, repeating-linear-gradient(90deg, #999 0 1px, #fff 1px 2px) 12px 7px / 6px 1px no-repeat, repeating-linear-gradient(#999 0 1px, #fff 1px 2px) 8px 0 / 1px 100% no-repeat; }
.row i.p { background: linear-gradient(#222, #222) 6px 7px / 5px 1px no-repeat, linear-gradient(#222, #222) 8px 5px / 1px 5px no-repeat, linear-gradient(#fff, #fff) 5px 4px / 7px 7px no-repeat, linear-gradient(#888, #888) 4px 3px / 9px 9px no-repeat, repeating-linear-gradient(90deg, #999 0 1px, #fff 1px 2px) 12px 7px / 6px 1px no-repeat, repeating-linear-gradient(#999 0 1px, #fff 1px 2px) 8px 0 / 1px 100% no-repeat; }
.row i.first { background-position: 2px 7px, 1px 4px, 0 3px, 9px 7px, 4px -30px; background-size: 5px 1px, 7px 7px, 9px 9px, 6px 1px, 1px 0; }
.row i.end { background-size: 5px 1px, 7px 7px, 9px 9px, 6px 1px, 1px 8px; }

/* scrollbars */
.vs { display: flex; flex-direction: column; width: 15px; background: #e8e8e7; }
.hs { display: flex; background: #e8e8e7; height: 15px; }
.vs b, .hs b { flex: none; width: 14px; height: 14px; display: flex; align-items: center; justify-content: center; }
.vs b::after, .hs b::after { content: ""; border: 4px solid transparent; }
.up::after { border-bottom-color: #000 !important; border-top: 0 !important; }
.dn::after { border-top-color: #000 !important; border-bottom: 0 !important; }
.lt::after { border-right-color: #000 !important; border-left: 0 !important; }
.rt::after { border-left-color: #000 !important; border-right: 0 !important; }
.dn, .rt { margin-left: auto; }
.vs .dn { margin: auto 0 0; }
.tv { height: 370px; }
.exphs { width: 191px; margin-left: 2px; }
.th { width: 140px; margin-left: 2px; }
.exptabs { height: 26px; border-top: 2px solid #222; margin: 3px 0 0 2px; display: flex; padding-left: 6px; font-family: "Liberation Sans", sans-serif; letter-spacing: -.700px; }
.exptabs span { height: 20px; padding: 3px 0 0 4px; border-right: 2px solid #111; border-bottom: 2px solid #111; border-radius: 0 0 4px 4px; color: #777; width: 90px; font-size: 10px; }
.exptabs .on { margin-top: -2px; height: 22px; width: 64px; padding: 5px 0 0 4px; background: #cfcfcb; color: #000; font-weight: bold; border-left: 1px solid #eee; border-bottom-width: 1px; letter-spacing: -.250px; }

/* document area */
.mdi { flex: 1; border-left: 2px solid #222; margin-left: 7px; box-shadow: -4px 0 0 -2px #fff; }
.frame { width: 721px; height: 492px; margin: 7px 0 0 10px; border: 1px solid #fff; border-right: 2px solid #222; border-bottom: 2px solid #111; padding: 4px 6px 0 2px; }
.inner { width: 711px; height: 480px; display: flex; border: 2px solid #555; padding: 1px 0 0 1px; background: #cfcfcb; }
.left { width: 692px; padding-left: 1px; }
.wtitle { margin-top: 2px; height: 18px; background: linear-gradient(90deg, #0a2672, #3a5da2 35%, #6a8dc2 65%, #a3caf0); color: #fff; font-weight: bold; display: flex; align-items: center; font-size: 10.500px; letter-spacing: .240px; padding-top: 1px; }
.wtitle svg, .doctab svg { width: 14px; height: 14px; margin: 0 2px; }
.canvas { height: 441px; background: #fdfcfd; position: relative; }
.obj { position: absolute; height: 79px; border: 4px solid; border-color: #0909a8 #08085c #08085c #0909a8; }
.obj div { height: 100%; background: #0a0a78; border: 4px solid; border-width: 3px 5px 5px 3px; border-color: #08085c #0909a8 #0909a8 #08085c; display: flex; align-items: center; justify-content: center; color: #dcdcf4; font: 13px/15px "Liberation Sans", sans-serif; padding-top: 2px; }
.o1 { left: 168px; top: 66px; width: 253px; }
.o1 span { letter-spacing: -.900px; margin-left: 1px; }
.o2 { left: 173px; top: 185px; width: 249px; }
.o2 span { letter-spacing: -.290px; }
.h { position: absolute; width: 6px; height: 6px; background: #777; }
.h1, .h4, .h6 { left: 165px; }
.h2, .h7 { left: 294px; }
.h3, .h5, .h8 { left: 422px; }
.h1, .h2, .h3 { top: 178px; }
.h4, .h5 { top: 221px; }
.h6, .h7, .h8 { top: 265px; }
.mdihs { height: 14px; }
.mh { width: 602px; }
.right { width: 15px; display: flex; flex-direction: column; }
.right .vs { height: 462px; }
.mv { height: 351px; }
.doctab { margin-left: 11px; width: 86px; height: 22px; display: flex; align-items: center; border: 1px solid; border-color: transparent #222 #222 #fff; border-right-width: 2px; border-radius: 0 0 4px 4px; letter-spacing: 0; }

/* output */
.output { height: 35px; flex: none; margin-top: 3px; border-top: 2px solid #222; display: flex; border-bottom: 1px solid #999; }
.outleft { width: 17px; padding: 5px 0 0 4px; }
.outleft b { display: block; width: 10px; height: 10px; }
.outleft svg { width: 8px; height: 8px; }
.outleft .dots { width: 9px; height: 9px; margin-top: 3px; }
.outbox { margin-top: 2px; width: 940px; height: 25px; border: 1px solid #222; border-width: 2px 2px 2px 1px; display: flex; }
.log { width: 850px; height: 19px; border: 2px solid #111; background: #fdfcfd; display: flex; align-items: center; font-size: 10.700px; letter-spacing: -.390px; }
.log svg { width: 16px; height: 16px; margin: 0 1px 0 1px; }
button { font: inherit; letter-spacing: -.150px; padding: 0; height: 18px; }
.c1 { width: 34px; margin-left: 4px; }
.c2 { width: 46px; margin-left: 3px; }

.status { height: 20px; flex: none; display: flex; }
.coords { width: 224px; padding: 3px 0 0 1px; }
.name { flex: 1; padding-top: 3px; letter-spacing: -.350px; }
.status b { width: 25px; height: 15px; font-weight: normal; border: 1px solid; border-color: #888 #fff #fff #888; margin-right: 3px; padding: 1px 0 0 1px; }
.status .last { width: 29px; margin: 0; border-right: 0; }

/* taskbar */
.taskbar { height: 28px; flex: none; border-top: 1px solid #fff; display: flex; position: relative; z-index: 2; padding-top: 2px; background: #cfcfcb; }
.start { width: 49px; height: 20px; margin-left: 2px; display: flex; align-items: center; font-weight: bold; padding-left: 2px; letter-spacing: 0; }
.start svg { width: 13px; height: 13px; margin-right: 1px; }
.grip2 { width: 2px; height: 20px; flex: none; border-left: 1px solid #fff; border-right: 1px solid #888; }
.ga { margin: 0 6px 0 7px; }
.gb { margin: 0 4px 0 4px; }
.gc { margin: 0 6px 0 11px; }
.q { width: 16px; height: 16px; margin: 2px 5.500px 0 0; }
.task { width: 99px; flex: none; height: 20px; margin-right: 4.600px; display: flex; align-items: center; padding-left: 3px; letter-spacing: -.050px; }
.task svg { width: 14px; height: 14px; margin-right: 3px; }
.task.t4 { margin-right: 0; }
.act { background: #e8e8e6; font-weight: bold; border-color: #444 #fff #fff #444; box-shadow: none; font-size: 10.300px; letter-spacing: .100px; }
.player { flex: none; width: 144px; height: 22px; background: linear-gradient(#c0ccd8, #e2e6ea 50%, #b4c0ca); overflow: hidden; }
.player svg { width: 158px; height: 22px; }
.spin { width: 13px; height: 21px; flex: none; background: #e2e2e0; }
.spin svg { width: 13px; height: 21px; }
.tray { margin: 0 2px 2px 5px; flex: 1; border: 1px solid; border-color: #999 #fff #fff #999; display: flex; align-items: center; padding-left: 4px; }
.tray svg { width: 14px; height: 14px; margin-right: 2.700px; }
.tray time { margin-left: 4px; }

/* context menu */
.ctx { position: absolute; left: 554px; top: 281px; width: 236px; height: 413px; overflow: hidden; padding: 3px 3px 0 2px; background: rgba(200, 199, 198, .45); border-top: 1px solid rgba(255, 255, 255, .3); border-right: 1px solid rgba(255, 255, 255, .4); letter-spacing: -.250px; }
.ctx p { margin: 0; height: 17.800px; line-height: 17px; padding-left: 21px; color: rgba(70, 70, 70, .62); position: relative; }
.ctx hr { border: 0; border-top: 1px solid rgba(100, 100, 100, .3); height: 5px; margin: 3.600px 0 0; }
.ctx .dark { color: rgba(0, 0, 20, .78); }
.ctx .mid { color: rgba(0, 0, 0, .65); }
.ctx .faint { color: rgba(90, 90, 90, .36); }
.sub i { position: absolute; right: 5px; top: 4px; border: 4px solid transparent; border-left: 5px solid #888; border-right: 0; }
.shadow { position: absolute; z-index: 3; left: 790px; top: 286px; width: 3px; height: 434px; background: linear-gradient(90deg, rgba(0,0,0,.55), rgba(0,0,0,.15)); }
.cursor { position: absolute; left: 554px; top: 371px; width: 12px; height: 20px; z-index: 4; }
```
